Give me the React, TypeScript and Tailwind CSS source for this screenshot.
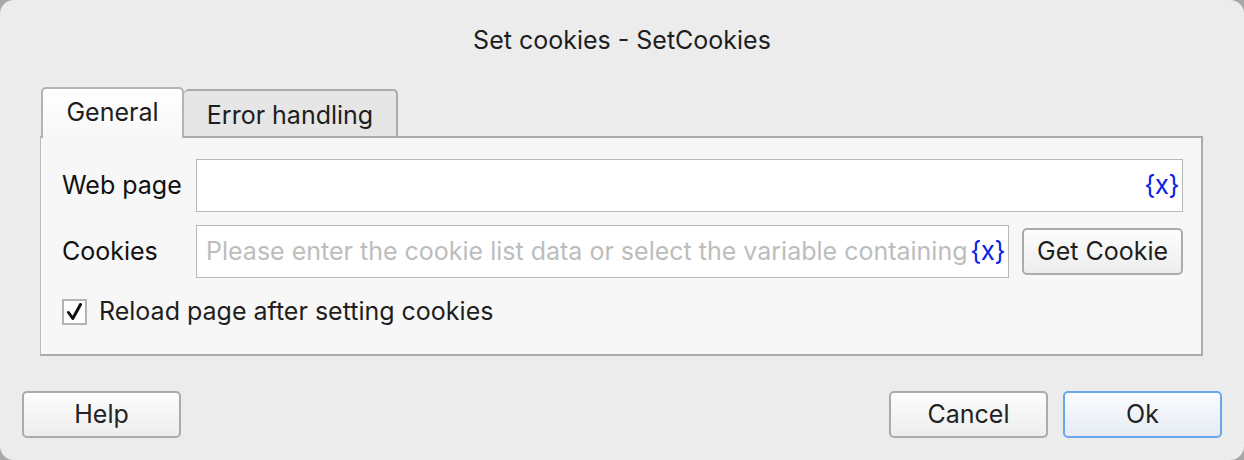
import React from "react";

const font = { fontFamily: "Inter, 'Liberation Sans', sans-serif" };

const VarToken = () => (
  <span className="text-[26px] leading-none text-[#0a1ee6] tracking-[-0.5px] pr-[3px] pb-[2px]">{"{x}"}</span>
);

const DialogButton = ({
  label,
  primary = false,
  className = "",
}: {
  label: string;
  primary?: boolean;
  className?: string;
}) => (
  <button
    type="button"
    className={`h-[47px] w-[159px] rounded-[5px] border-2 text-[25px] text-[#222] flex items-center justify-center ${
      primary
        ? "border-[#6aa6ea] bg-gradient-to-b from-[#fafcff] to-[#e6ebf3]"
        : "border-[#ababab] bg-gradient-to-b from-[#fdfdfd] to-[#ededed]"
    } ${className}`}
  >
    {label}
  </button>
);

export default function App() {
  return (
    <div className="w-[1244px] h-[460px] bg-[#a8a8a8]" style={font}>
      <div className="w-full h-full rounded-[14px] bg-[#ececec] flex flex-col">
        {/* タイトル */}
        <div className="h-[85px] pt-[22px] text-center text-[25px] text-[#1e1e1e]">
          Set cookies - SetCookies
        </div>

        {/* タブ */}
        <div className="pl-[41px] flex items-end h-[51px]">
          <div className="relative z-10 h-[51px] w-[143px] rounded-t-[5px] border-2 border-b-0 border-[#b4b4b4] bg-gradient-to-b from-white to-[#f7f7f7] flex items-center justify-center text-[25px] text-[#1e1e1e] pb-[2px] mb-[-2px]">
            General
          </div>
          <div className="h-[47px] w-[214px] rounded-t-[5px] border-2 border-b-0 border-l-0 border-[#ababab] bg-[#e6e6e6] flex items-center justify-center text-[25px] text-[#1e1e1e] pt-[4px]">
            Error handling
          </div>
        </div>

        {/* 本体パネル */}
        <div className="ml-[40px] mr-[41px] h-[220px] border-2 border-l border-[#ababab] border-l-[#bcbcbc] bg-[#f7f7f7] pl-[21px] pr-[18px] pt-[21px]">
          <div className="flex items-center h-[53px]">
            <div className="w-[134px] text-[25px] text-[#111]">Web page</div>
            <div className="flex-1 h-[53px] bg-white border border-[#b8b8b8] flex items-center justify-end">
              <VarToken />
            </div>
          </div>

          <div className="flex items-center h-[53px] mt-[13px]">
            <div className="w-[134px] text-[25px] text-[#111]">Cookies</div>
            <div className="w-[813px] h-[53px] bg-white border border-[#b8b8b8] flex items-center pl-[9px] overflow-hidden">
              <span className="flex-1 text-[25px] text-[#bdbdbd] whitespace-nowrap overflow-hidden">
                Please enter the cookie list data or select the variable containing
              </span>
              <VarToken />
            </div>
            <div className="ml-[13px] flex-1 h-[47px] rounded-[5px] border-2 border-[#ababab] bg-gradient-to-b from-[#fdfdfd] to-[#ededed] flex items-center justify-center text-[25px] text-[#1e1e1e]">
              Get Cookie
            </div>
          </div>

          <label className="flex items-center mt-[15px] gap-[12px]">
            <span className="w-[25px] h-[26px] bg-white border-2 border-[#b4b4b4] flex items-center justify-center">
              <svg width="17" height="18" viewBox="0 0 17 18" fill="none">
                <path d="M2.5 9.5 L6.8 15.5 L14.5 1.5" stroke="#111" strokeWidth="3" strokeLinecap="round" strokeLinejoin="round" />
              </svg>
            </span>
            <span className="text-[25px] text-[#1e1e1e]">Reload page after setting cookies</span>
          </label>
        </div>

        {/* フッター */}
        <div className="flex items-center px-[22px] pt-[35px]">
          <DialogButton label="Help" />
          <div className="flex-1" />
          <DialogButton label="Cancel" />
          <DialogButton label="Ok" primary className="ml-[15px]" />
        </div>
      </div>
    </div>
  );
}
